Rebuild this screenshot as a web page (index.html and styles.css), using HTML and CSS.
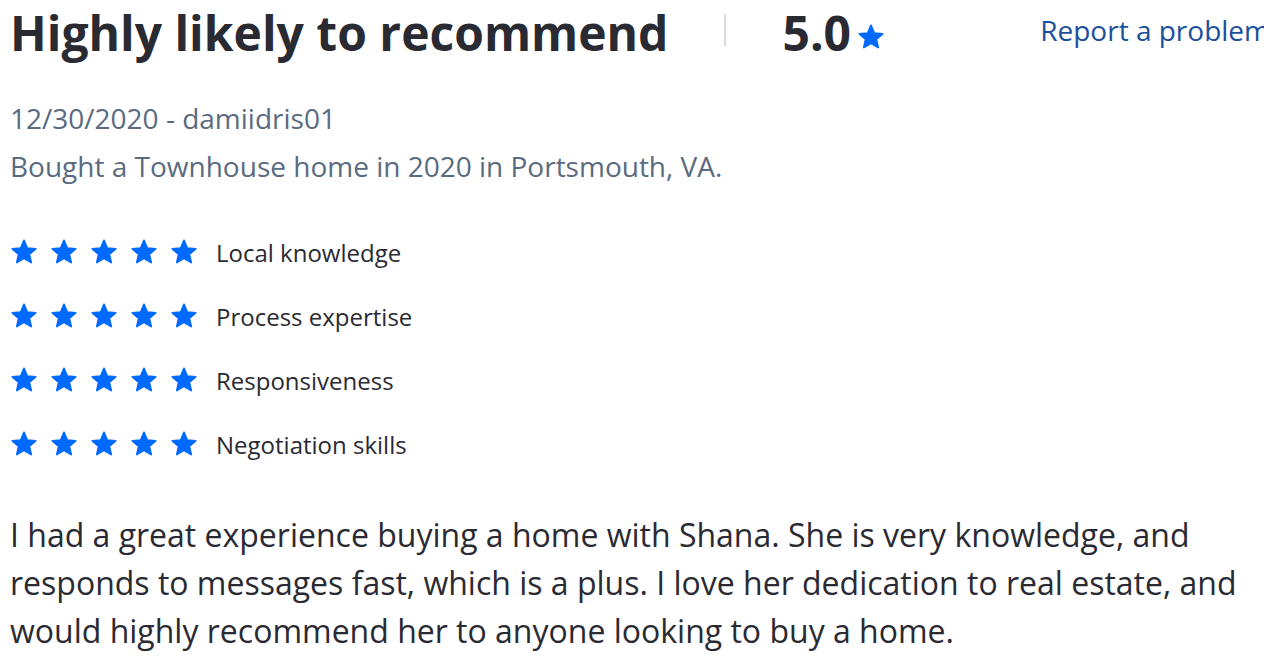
FILE: index.html
```html
<!DOCTYPE html>
<html>
<head>
<meta charset="utf-8">
<link rel="stylesheet" href="styles.css">
</head>
<body>
<svg width="0" height="0" class="defs">
  <defs>
    <path id="star" d="M12 17.27L18.18 21l-1.64-7.03L22 9.24l-7.19-.61L12 2 9.19 8.63 2 9.24l5.46 4.73L5.82 21z"/>
  </defs>
</svg>
<div class="review">
  <div class="header">
    <h1 class="title">Highly likely to recommend</h1>
    <span class="divider"></span>
    <span class="score">5.0</span>
    <svg class="star-lg" viewBox="0 0 24 24"><use href="#star"/></svg>
    <a class="report" href="#">Report a problem</a>
  </div>
  <div class="meta meta-first">12/30/2020 - damiidris01</div>
  <div class="meta">Bought a Townhouse home in 2020 in Portsmouth, VA.</div>
  <div class="ratings">
    <div class="rating-row">
      <div class="stars">
        <svg class="star" viewBox="0 0 24 24"><use href="#star"/></svg>
        <svg class="star" viewBox="0 0 24 24"><use href="#star"/></svg>
        <svg class="star" viewBox="0 0 24 24"><use href="#star"/></svg>
        <svg class="star" viewBox="0 0 24 24"><use href="#star"/></svg>
        <svg class="star" viewBox="0 0 24 24"><use href="#star"/></svg>
      </div>
      <span class="label">Local knowledge</span>
    </div>
    <div class="rating-row">
      <div class="stars">
        <svg class="star" viewBox="0 0 24 24"><use href="#star"/></svg>
        <svg class="star" viewBox="0 0 24 24"><use href="#star"/></svg>
        <svg class="star" viewBox="0 0 24 24"><use href="#star"/></svg>
        <svg class="star" viewBox="0 0 24 24"><use href="#star"/></svg>
        <svg class="star" viewBox="0 0 24 24"><use href="#star"/></svg>
      </div>
      <span class="label">Process expertise</span>
    </div>
    <div class="rating-row">
      <div class="stars">
        <svg class="star" viewBox="0 0 24 24"><use href="#star"/></svg>
        <svg class="star" viewBox="0 0 24 24"><use href="#star"/></svg>
        <svg class="star" viewBox="0 0 24 24"><use href="#star"/></svg>
        <svg class="star" viewBox="0 0 24 24"><use href="#star"/></svg>
        <svg class="star" viewBox="0 0 24 24"><use href="#star"/></svg>
      </div>
      <span class="label">Responsiveness</span>
    </div>
    <div class="rating-row">
      <div class="stars">
        <svg class="star" viewBox="0 0 24 24"><use href="#star"/></svg>
        <svg class="star" viewBox="0 0 24 24"><use href="#star"/></svg>
        <svg class="star" viewBox="0 0 24 24"><use href="#star"/></svg>
        <svg class="star" viewBox="0 0 24 24"><use href="#star"/></svg>
        <svg class="star" viewBox="0 0 24 24"><use href="#star"/></svg>
      </div>
      <span class="label">Negotiation skills</span>
    </div>
  </div>
  <p class="body">I had a great experience buying a home with Shana. She is very knowledge, and responds to messages fast, which is a plus. I love her dedication to real estate, and would highly recommend her to anyone looking to buy a home.</p>
</div>
</body>
</html>
```

FILE: styles.css
```css
html, body {
  margin: 0;
  padding: 0;
  background: #ffffff;
  overflow: hidden;
}
body {
  font-family: "Open Sans", "Liberation Sans", sans-serif;
  color: #2a2a33;
}
.defs {
  position: absolute;
  width: 0;
  height: 0;
}
.review {
  width: 1270px;
  padding-left: 10px;
  box-sizing: border-box;
}
.header {
  display: flex;
  align-items: flex-start;
  height: 60px;
}
.title {
  margin: 0;
  font-size: 48px;
  font-weight: 700;
  line-height: normal;
  color: #2a2a33;
}
.divider {
  align-self: center;
  width: 2px;
  height: 32px;
  background: #dcdcdc;
  margin: 0 56px 0 56px;
}
.score {
  font-size: 48px;
  font-weight: 700;
  line-height: normal;
}
.star-lg {
  align-self: center;
  width: 28px;
  height: 28px;
  fill: #006aff;
  stroke: #006aff;
  stroke-width: 1.5;
  stroke-linejoin: round;
  margin: 14px 0 0 6px;
}
.report {
  margin-left: auto;
  font-size: 28px;
  color: #1b4f9c;
  text-decoration: none;
  align-self: center;
  white-space: nowrap;
}
.meta {
  font-size: 28px;
  line-height: 48px;
  color: #5a6b80;
}
.meta-first {
  margin-top: 34px;
}
.ratings {
  display: flex;
  flex-direction: column;
  gap: 24px;
  margin-top: 42px;
}
.rating-row {
  display: flex;
  align-items: center;
  height: 40px;
}
.stars {
  display: flex;
  gap: 12px;
  margin-right: 18px;
}
.star {
  width: 28px;
  height: 28px;
  fill: #006aff;
  stroke: #006aff;
  stroke-width: 1.5;
  stroke-linejoin: round;
}
.label {
  font-size: 24px;
  color: #2a2a33;
}
.body {
  margin: 47px 0 0 0;
  font-size: 32px;
  line-height: 48px;
  width: 1250px;
  color: #2a2a33;
}
```
